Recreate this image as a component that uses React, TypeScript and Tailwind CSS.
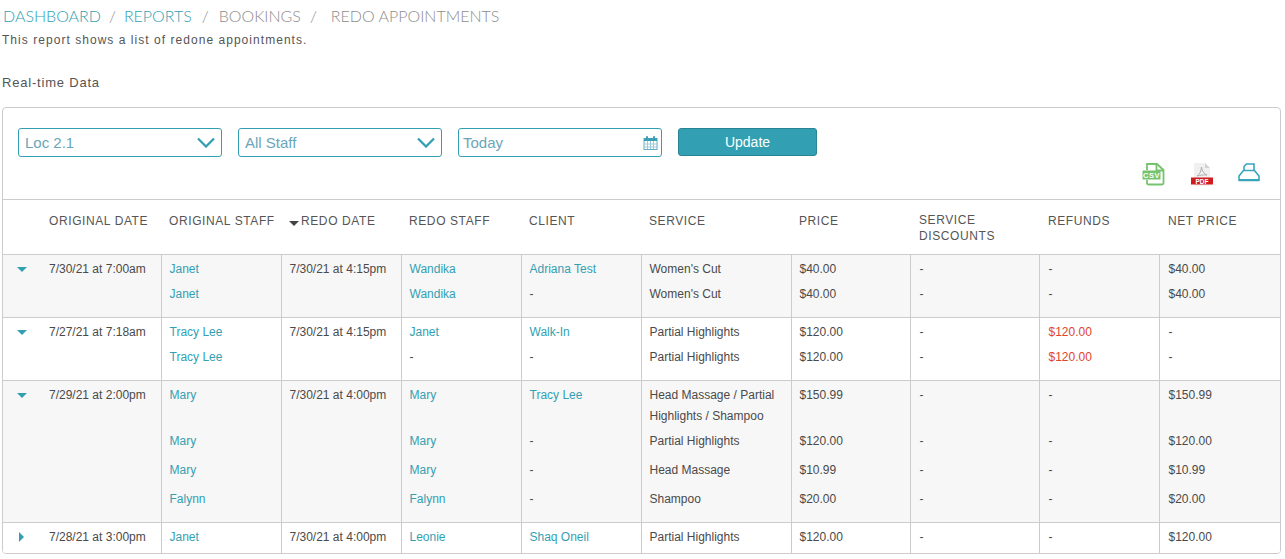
type SubRow = {
  h: number;
  origStaff: string;
  redoStaff: string;
  client: string;
  service: string;
  price: string;
  discount: string;
  refund: string;
  net: string;
};

type Group = {
  open: boolean;
  shaded: boolean;
  origDate: string;
  redoDate: string;
  height: number;
  subs: SubRow[];
};

const groups: Group[] = [
  {
    open: true,
    shaded: true,
    origDate: "7/30/21 at 7:00am",
    redoDate: "7/30/21 at 4:15pm",
    height: 63,
    subs: [
      { h: 25, origStaff: "Janet", redoStaff: "Wandika", client: "Adriana Test", service: "Women's Cut", price: "$40.00", discount: "-", refund: "-", net: "$40.00" },
      { h: 25, origStaff: "Janet", redoStaff: "Wandika", client: "-", service: "Women's Cut", price: "$40.00", discount: "-", refund: "-", net: "$40.00" },
    ],
  },
  {
    open: true,
    shaded: false,
    origDate: "7/27/21 at 7:18am",
    redoDate: "7/30/21 at 4:15pm",
    height: 63,
    subs: [
      { h: 25, origStaff: "Tracy Lee", redoStaff: "Janet", client: "Walk-In", service: "Partial Highlights", price: "$120.00", discount: "-", refund: "$120.00", net: "-" },
      { h: 25, origStaff: "Tracy Lee", redoStaff: "-", client: "-", service: "Partial Highlights", price: "$120.00", discount: "-", refund: "$120.00", net: "-" },
    ],
  },
  {
    open: true,
    shaded: true,
    origDate: "7/29/21 at 2:00pm",
    redoDate: "7/30/21 at 4:00pm",
    height: 142,
    subs: [
      { h: 46, origStaff: "Mary", redoStaff: "Mary", client: "Tracy Lee", service: "Head Massage / Partial Highlights / Shampoo", price: "$150.99", discount: "-", refund: "-", net: "$150.99" },
      { h: 29, origStaff: "Mary", redoStaff: "Mary", client: "-", service: "Partial Highlights", price: "$120.00", discount: "-", refund: "-", net: "$120.00" },
      { h: 29, origStaff: "Mary", redoStaff: "Mary", client: "-", service: "Head Massage", price: "$10.99", discount: "-", refund: "-", net: "$10.99" },
      { h: 29, origStaff: "Falynn", redoStaff: "Falynn", client: "-", service: "Shampoo", price: "$20.00", discount: "-", refund: "-", net: "$20.00" },
    ],
  },
  {
    open: false,
    shaded: false,
    origDate: "7/28/21 at 3:00pm",
    redoDate: "7/30/21 at 4:00pm",
    height: 30,
    subs: [
      { h: 25, origStaff: "Janet", redoStaff: "Leonie", client: "Shaq Oneil", service: "Partial Highlights", price: "$120.00", discount: "-", refund: "-", net: "$120.00" },
    ],
  },
];

const headCell = "align-top whitespace-nowrap px-2 pt-[13px] text-left text-[12px] font-normal leading-[16px] tracking-[0.6px] text-[#555]";
const headCellWide = "align-top whitespace-nowrap pl-[9px] pt-[13px] text-left text-[12px] font-normal leading-[16px] tracking-[0.6px] text-[#555]";
const headCellTwoLine = "align-top whitespace-nowrap pl-[9px] pt-[12px] text-left text-[12px] font-normal leading-[16px] tracking-[0.6px] text-[#555]";
const bodyCell = "align-top border-l border-[#ccc] px-2 pt-1 text-[12px] leading-[21px] text-[#4a4a4a]";
const bodyCellWide = "align-top border-l border-[#ccc] pl-[9px] pt-1 text-[12px] leading-[21px] text-[#4a4a4a]";

function CsvIcon() {
  return (
    <svg width="24" height="24" viewBox="0 1 24 24" className="block">
      <path d="M5 8V2h10l6.500 6v13a1.500 1.500 0 0 1-1.500 1.500H6.500A1.500 1.500 0 0 1 5 21v-3" fill="none" stroke="#77c36d" strokeWidth="1.800" />
      <path d="M14.500 2.500V8.500H21" fill="none" stroke="#77c36d" strokeWidth="1.800" />
      <rect x="0.500" y="8.500" width="18" height="9" rx="0.500" fill="#77c36d" />
      <text x="9.500" y="15.500" textAnchor="middle" fontSize="7.500" fontWeight="700" letterSpacing="0.500" fill="#fff" fontFamily="'Liberation Sans', sans-serif">
        CSV
      </text>
    </svg>
  );
}

function PdfIcon() {
  return (
    <svg width="24" height="24" viewBox="0 0 24 24" className="block">
      <path d="M4 0h11l5 5v18H4z" fill="#f0f0f0" />
      <path d="M15 0v5h5z" fill="#d4d4d4" />
      <path d="M7 13c3-1.500 4-5 4.500-9C12 8 14 11 17 12c-3.500-.3-7 .3-10 1z" fill="none" stroke="#aaa" strokeWidth="0.900" />
      <rect x="1" y="14.500" width="22" height="7" fill="#cf1c22" />
      <text x="12" y="20.500" textAnchor="middle" fontSize="6.500" fontWeight="700" fill="#fff" fontFamily="'Liberation Sans', sans-serif">
        PDF
      </text>
    </svg>
  );
}

function PrintIcon() {
  return (
    <svg width="22" height="19" viewBox="0 0 22 19" className="block">
      <path d="M6 8V3.500L8.500 1H16V8" fill="none" stroke="#38a5bb" strokeWidth="1.600" />
      <path d="M5.500 7.500H16.500L21 13V17.500H1V13z" fill="none" stroke="#38a5bb" strokeWidth="1.600" strokeLinejoin="round" />
      <path d="M1 17h20" fill="none" stroke="#38a5bb" strokeWidth="2" />
    </svg>
  );
}

function CalendarIcon() {
  return (
    <svg width="15" height="16" viewBox="0 0 15 16" className="block">
      <rect x="1" y="3.500" width="13" height="11" fill="#fff" stroke="#62adc2" />
      <rect x="1" y="3" width="13" height="3" fill="#3c9fb8" />
      <rect x="3" y="1" width="2" height="4" rx="1" fill="#3c9fb8" />
      <rect x="10" y="1" width="2" height="4" rx="1" fill="#3c9fb8" />
      <path d="M4.500 6v8M7.500 6v8M10.500 6v8M1 9h13M1 12h13" stroke="#9ccbd8" strokeWidth="1" />
    </svg>
  );
}

function Chevron() {
  return (
    <svg width="18" height="11" viewBox="0 0 18 11" className="block">
      <path d="M1 1.500L9 9.500L17 1.500" fill="none" stroke="#339fb3" strokeWidth="2.300" />
    </svg>
  );
}

function Select({ label }: { label: string }) {
  return (
    <div className="flex h-[29px] w-[204px] items-center justify-between rounded-[3px] border border-[#339fb3] pl-[6px] pr-[6px]">
      <span className="pt-[1px] text-[15px] text-[#6aa6b8]">{label}</span>
      <Chevron />
    </div>
  );
}

function StaffLink({ value }: { value: string }) {
  if (value === "-") return <span className="text-[#4a4a4a]">-</span>;
  return <a className="text-[#339fb3]">{value}</a>;
}

export default function App() {
  return (
    <div className="w-[1285px] bg-white font-['Liberation_Sans',sans-serif] text-[#444]">
      <div className="flex h-[31px] items-center pl-[3px] font-['Lato',sans-serif] text-[16px] font-light text-[#8d8d8d]">
        <a className="text-[#339fb3]">DASHBOARD</a>
        <span className="mx-[8px]">/</span>
        <a className="text-[#339fb3]">REPORTS</a>
        <span className="mx-[10px]">/</span>
        <span>BOOKINGS</span>
        <span className="ml-[9px] mr-[14px]">/</span>
        <span>REDO APPOINTMENTS</span>
      </div>
      <p className="mt-[1px] pl-[2px] text-[12px] leading-[16px] tracking-[1.04px] text-[#555]">
        This report shows a list of redone appointments.
      </p>
      <p className="mt-[27px] pl-[2px] text-[13px] leading-[16px] tracking-[0.8px] text-[#555]">
        Real-time Data
      </p>

      <div className="mx-[2px] mt-[16px] w-[1279px] overflow-hidden rounded-[4px] border border-[#ccc]">
        <div className="relative h-[91px]">
          <div className="flex gap-[16px] pl-[15px] pt-[20px]">
            <Select label="Loc 2.1" />
            <Select label="All Staff" />
            <div className="flex h-[29px] w-[204px] items-center justify-between rounded-[3px] border border-[#339fb3] pl-[4px] pr-[3px]">
              <span className="pt-[1px] text-[15px] text-[#6aa6b8]">Today</span>
              <CalendarIcon />
            </div>
            <button className="h-[28px] w-[139px] rounded-[3px] border border-[#2a8494] bg-[#339fb3] text-[14px] text-white">
              Update
            </button>
          </div>
          <div className="absolute right-[20px] top-[55px] flex items-start gap-[24px]">
            <CsvIcon />
            <PdfIcon />
            <PrintIcon />
          </div>
        </div>

        <table className="w-[1278px] table-fixed border-collapse">
          <colgroup>
            <col className="w-[38px]" />
            <col className="w-[120px]" />
            <col className="w-[120px]" />
            <col className="w-[120px]" />
            <col className="w-[120px]" />
            <col className="w-[120px]" />
            <col className="w-[150px]" />
            <col className="w-[119px]" />
            <col className="w-[129px]" />
            <col className="w-[120px]" />
            <col />
          </colgroup>
          <thead>
            <tr className="h-[55px] border-t border-[#ccc]">
              <th />
              <th className={headCell}>ORIGINAL DATE</th>
              <th className={headCell}>ORIGINAL STAFF</th>
              <th className={headCell}>
                <span className="relative">
                  <span className="absolute left-0 top-[7px] h-0 w-0 border-x-[5px] border-t-[5px] border-x-transparent border-t-[#444]" />
                  <span className="pl-[12px]">REDO DATE</span>
                </span>
              </th>
              <th className={headCell}>REDO STAFF</th>
              <th className={headCell}>CLIENT</th>
              <th className={headCell}>SERVICE</th>
              <th className={headCell}>PRICE</th>
              <th className={headCellTwoLine}>
                SERVICE
                <br />
                DISCOUNTS
              </th>
              <th className={headCellWide}>REFUNDS</th>
              <th className={headCellWide}>NET PRICE</th>
            </tr>
          </thead>
          <tbody>
            {groups.map((group) => {
              const subs = group.subs;
              return (
                <tr
                  key={group.origDate}
                  style={{ height: group.height }}
                  className={`border-t border-[#ccc] ${group.shaded ? "bg-[#f7f7f7]" : "bg-white"}`}
                >
                  <td className="align-top pl-[14px] pt-[12px]">
                    {group.open ? (
                      <div className="h-0 w-0 border-x-[5px] border-t-[5px] border-x-transparent border-t-[#339fb3]" />
                    ) : (
                      <div className="ml-[2px] mt-[-3px] h-0 w-0 border-y-[5px] border-l-[5px] border-y-transparent border-l-[#339fb3]" />
                    )}
                  </td>
                  <td className="align-top px-2 pt-1 text-[12px] leading-[21px] text-[#4a4a4a]">{group.origDate}</td>
                  <td className={bodyCell}>
                    {subs.map((s, i) => (
                      <div key={i} style={{ height: s.h }}>
                        <StaffLink value={s.origStaff} />
                      </div>
                    ))}
                  </td>
                  <td className={bodyCell}>{group.redoDate}</td>
                  <td className={bodyCell}>
                    {subs.map((s, i) => (
                      <div key={i} style={{ height: s.h }}>
                        <StaffLink value={s.redoStaff} />
                      </div>
                    ))}
                  </td>
                  <td className={bodyCell}>
                    {subs.map((s, i) => (
                      <div key={i} style={{ height: s.h }}>
                        <StaffLink value={s.client} />
                      </div>
                    ))}
                  </td>
                  <td className={bodyCell}>
                    {subs.map((s, i) => (
                      <div key={i} style={{ height: s.h }}>
                        {s.service}
                      </div>
                    ))}
                  </td>
                  <td className={bodyCell}>
                    {subs.map((s, i) => (
                      <div key={i} style={{ height: s.h }}>
                        {s.price}
                      </div>
                    ))}
                  </td>
                  <td className={bodyCellWide}>
                    {subs.map((s, i) => (
                      <div key={i} style={{ height: s.h }}>
                        {s.discount}
                      </div>
                    ))}
                  </td>
                  <td className={bodyCellWide}>
                    {subs.map((s, i) => (
                      <div key={i} style={{ height: s.h }} className={s.refund === "-" ? "" : "text-[#e0452b]"}>
                        {s.refund}
                      </div>
                    ))}
                  </td>
                  <td className={bodyCellWide}>
                    {subs.map((s, i) => (
                      <div key={i} style={{ height: s.h }}>
                        {s.net}
                      </div>
                    ))}
                  </td>
                </tr>
              );
            })}
          </tbody>
        </table>
      </div>
    </div>
  );
}
